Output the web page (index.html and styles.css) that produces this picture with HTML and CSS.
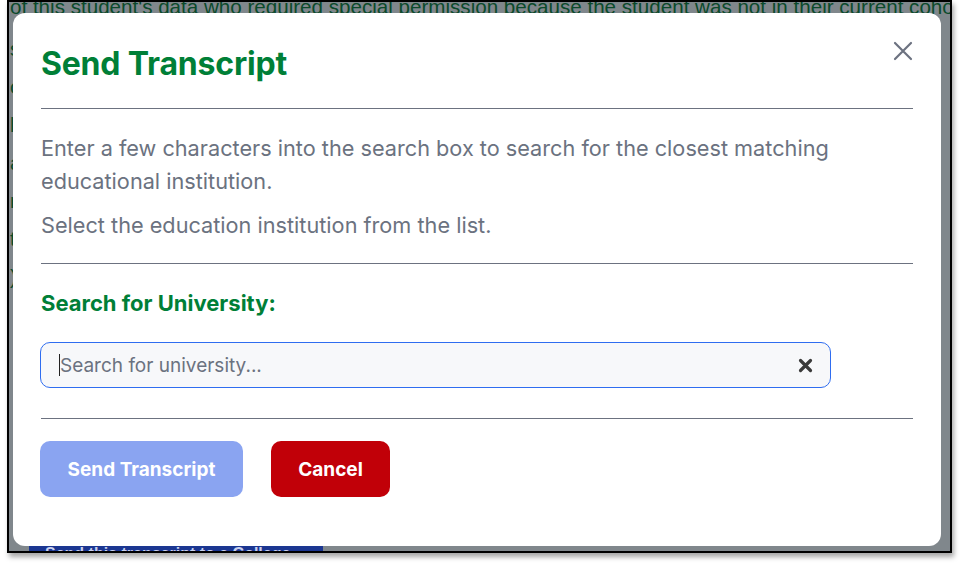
FILE: index.html
```html
<!DOCTYPE html>
<html lang="en">
<head>
<meta charset="utf-8">
<title>Send Transcript</title>
<link rel="stylesheet" href="styles.css">
</head>
<body>
<div class="window">
  <div class="page">
    <p class="bg-line first">of this student's data who required special permission because the student was not in their current cohort</p>
    <p class="bg-line">s</p>
    <p class="bg-line">o</p>
    <p class="bg-line">l</p>
    <p class="bg-line">a</p>
    <p class="bg-line">r</p>
    <p class="bg-line">t</p>
    <p class="bg-line">)</p>
    <div class="bg-button">Send this transcript to a College</div>
  </div>
  <div class="modal" role="dialog" aria-labelledby="title">
    <div class="modal-header">
      <h1 id="title" class="modal-title">Send Transcript</h1>
      <button class="close" aria-label="Close">
        <svg width="20" height="20" viewBox="0 0 20 20"><path d="M2 2 L18 18 M18 2 L2 18" stroke="#6c7280" stroke-width="2.2" stroke-linecap="round" fill="none"/></svg>
      </button>
    </div>
    <hr class="rule rule-top">
    <p class="info">Enter a few characters into the search box to search for the closest matching educational institution.</p>
    <p class="info second">Select the education institution from the list.</p>
    <hr class="rule rule-mid">
    <label class="field-label">Search for University:</label>
    <div class="search">
      <span class="caret"></span>
      <span class="placeholder">Search for university...</span>
      <span class="clear">
        <svg width="15" height="15" viewBox="0 0 15 15"><path d="M2.5 2.5 L12.5 12.5 M12.5 2.5 L2.5 12.5" stroke="#3a3a3a" stroke-width="3.2" stroke-linecap="round" fill="none"/></svg>
      </span>
    </div>
    <hr class="rule rule-bottom">
    <div class="actions">
      <button class="btn btn-send">Send Transcript</button>
      <button class="btn btn-cancel">Cancel</button>
    </div>
  </div>
</div>
</body>
</html>
```

FILE: styles.css
```css
* { box-sizing: border-box; }

html, body {
  margin: 0;
  padding: 0;
  background: #ffffff;
}

body {
  width: 960px;
  height: 566px;
  overflow: hidden;
  font-family: Inter, "Noto Sans", "Liberation Sans", sans-serif;
}

.window {
  position: relative;
  margin-left: 7px;
  width: 945px;
  height: 553px;
  border: 2px solid #000;
  background: #80878c;
  overflow: hidden;
  box-shadow: 2px 4px 5px rgba(0, 0, 0, 0.35);
}

.page {
  padding-left: 1px;
  color: #0b4a2b;
  font-family: "Liberation Sans", Arial, sans-serif;
  font-size: 20.6px;
}

.bg-line {
  margin: 0;
  height: 38px;
  line-height: 20px;
  white-space: nowrap;
}

.bg-line.first {
  margin-top: -5px;
  height: 42px;
}

.bg-button {
  position: absolute;
  left: 20px;
  top: 539px;
  width: 294px;
  height: 30px;
  background: #1b3691;
  color: #c9d1ee;
  font-weight: bold;
  font-size: 16px;
  padding: 4px 16px;
}

.modal {
  position: absolute;
  left: 4px;
  top: 11px;
  width: 928px;
  height: 533px;
  background: #fff;
  border-radius: 12px;
  padding: 0 28px;
}

.modal-header {
  display: flex;
  align-items: center;
  justify-content: space-between;
  padding-top: 31px;
}

.modal-title {
  margin: 0;
  font-size: 32px;
  line-height: 40px;
  font-weight: 700;
  color: #007f37;
  letter-spacing: -0.2px;
}

.close {
  border: 0;
  background: none;
  padding: 0;
  margin-right: 0;
  margin-top: -26px;
  width: 20px;
  height: 20px;
  display: flex;
}

.rule {
  border: 0;
  border-top: 1px solid #6c7280;
  margin: 0;
}

.rule-top { margin-top: 24px; }

.info {
  margin: 0;
  font-size: 21.7px;
  line-height: 33px;
  color: #6b7280;
}

.rule-top + .info { margin-top: 23px; }
.info.second { margin-top: 11px; }

.rule-mid { margin-top: 21px; }

.field-label {
  display: block;
  margin-top: 24px;
  font-size: 22px;
  line-height: 30px;
  font-weight: 700;
  color: #007f37;
}

.search {
  position: relative;
  display: flex;
  align-items: center;
  margin-top: 24px;
  margin-left: -1px;
  width: 791px;
  height: 46px;
  border: 1.5px solid #2f6df0;
  border-radius: 10px;
  background: #f7f8fa;
  padding-left: 18px;
  padding-right: 17px;
}

.caret {
  width: 1px;
  height: 22px;
  background: #222;
}

.placeholder {
  flex: 1;
  font-size: 19px;
  color: #6b7280;
}

.clear {
  display: flex;
  width: 15px;
  height: 15px;
}

.rule-bottom { margin-top: 30px; }

.actions {
  display: flex;
  gap: 28px;
  margin-top: 22px;
  margin-left: -1px;
}

.btn {
  border: 0;
  height: 56px;
  border-radius: 10px;
  font-family: Inter, "Noto Sans", "Liberation Sans", sans-serif;
  font-size: 19px;
  font-weight: 700;
  color: #fff;
}

.btn-send {
  width: 203px;
  background: #8aa4f1;
}

.btn-cancel {
  width: 119px;
  background: #c10008;
}
```
